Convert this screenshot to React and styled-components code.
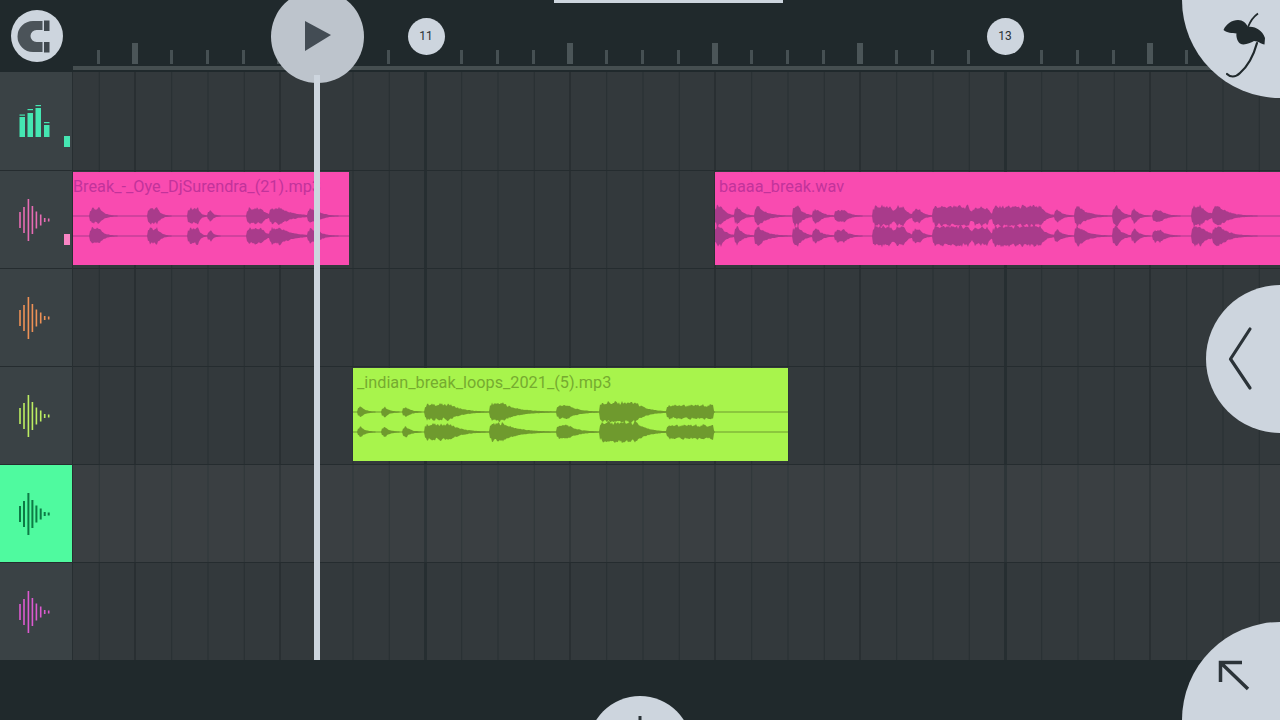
import React from "react";
import styled, { createGlobalStyle } from "styled-components";

const STEP = 36.25;
const LIGHT = "#cdd5de";
const DARK = "#20292c";

const GlobalStyle = createGlobalStyle`
  html, body {
    margin: 0;
    padding: 0;
    background: ${DARK};
    font-family: Roboto, "Liberation Sans", sans-serif;
  }
`;

// pseudo random so the wave forms stay the same on every load
const noise = (i) => {
  const v = Math.sin(i * 12.9898) * 43758.5453;
  return v - Math.floor(v);
};

// a hit is [start, hold, length, amplitude]
const envelope = (hits, x, seed) => {
  let amp = 0;
  hits.forEach(([start, hold, len, a]) => {
    const t = x - start;
    if (t < 0 || t > len) return;
    let v;
    if (t < 1.5) v = a * 0.7;
    else if (t < hold) v = a * (0.92 + 0.08 * Math.sin(t * 0.9));
    else v = a * Math.exp((-3.2 * (t - hold)) / (len - hold)) * (1 - (t - hold) / (len - hold) / 2);
    amp = Math.max(amp, v);
  });
  if (amp < 0.2) return 0;
  return amp * (0.78 + 0.34 * noise(x + seed)) + 0.3;
};

const wavePath = (hits, width, mid, seed) => {
  const top = [];
  const bottom = [];
  for (let x = 0; x <= width; x++) {
    const a = envelope(hits, x, seed);
    const b = envelope(hits, x, seed + 31);
    top.push(`${x} ${(mid - a).toFixed(1)}`);
    bottom.unshift(`${x} ${(mid + b).toFixed(1)}`);
  }
  return `M${top.join("L")}L${bottom.join("L")}Z`;
};

const firstPink = {
  name: "Break_-_Oye_DjSurendra_(21).mp3",
  left: 0,
  width: 276,
  bg: "#f94bb0",
  fg: "#c2339b",
  wave: "#a93b8b",
  hits: [
    [17, 9, 28, 8],
    [75, 9, 24, 8],
    [115, 10, 20, 8],
    [135, 3, 14, 5],
    [174, 14, 34, 8],
    [197, 10, 56, 8],
    [235, 8, 32, 7],
  ],
};

const limeLoop = {
  name: "_indian_break_loops_2021_(5).mp3",
  nameInset: 4,
  left: 280,
  width: 435,
  bg: "#a8f44c",
  fg: "#76ab30",
  wave: "#6f9a2e",
  hits: [
    [5, 3, 20, 5],
    [29, 3, 20, 5],
    [50, 3, 22, 5],
    [72, 24, 70, 8],
    [137, 12, 70, 9],
    [204, 10, 50, 7],
    [247, 35, 76, 10],
    [314, 46, 48, 7],
  ],
};

const secondPink = {
  name: "baaaa_break.wav",
  nameInset: 4,
  left: 642,
  width: 565,
  bg: "#f94bb0",
  fg: "#c2339b",
  wave: "#a93b8b",
  hits: [
    [0, 6, 26, 10],
    [20, 2, 22, 10],
    [40, 3, 36, 10],
    [78, 5, 26, 10],
    [98, 4, 26, 7],
    [120, 9, 30, 6],
    [158, 16, 44, 10],
    [180, 8, 26, 10],
    [198, 6, 24, 7],
    [218, 24, 34, 10],
    [237, 16, 34, 10],
    [258, 14, 28, 9],
    [278, 40, 64, 10],
    [317, 8, 30, 10],
    [340, 2, 22, 7],
    [360, 3, 38, 10],
    [398, 4, 24, 10],
    [417, 3, 20, 7],
    [438, 7, 30, 6],
    [477, 8, 38, 10],
    [498, 6, 44, 10],
  ],
};

const rowClips = [[], [firstPink, secondPink], [], [limeLoop], [], []];

const Page = styled.div`
  position: relative;
  width: 1280px;
  height: 720px;
  overflow: hidden;
  background: ${DARK};
  display: flex;
  flex-direction: column;
`;

const Header = styled.header`
  height: 72px;
  display: flex;
  flex: none;
`;

const SnapSlot = styled.div`
  width: 73px;
  flex: none;
  display: flex;
  align-items: center;
  justify-content: center;
`;

const SnapButton = styled.button`
  width: 52px;
  height: 52px;
  padding: 0;
  border: 0;
  border-radius: 50%;
  background: ${LIGHT};
  display: flex;
  align-items: center;
  justify-content: center;
`;

const Ruler = styled.div`
  flex: 1;
  display: flex;
  flex-direction: column;
  justify-content: flex-end;
  padding-bottom: 2px;
`;

const Ticks = styled.div`
  display: flex;
  align-items: flex-end;
  height: 22px;
  padding-left: 7.5px;
`;

const TickSlot = styled.div`
  flex: none;
  width: ${STEP}px;
  display: flex;
  justify-content: center;
`;

const Tick = styled.span`
  display: block;
  width: ${(p) => (p.$major ? 6 : 3)}px;
  height: ${(p) => (p.$major ? 21 : 14)}px;
  background: ${(p) => (p.$major ? "#4b5558" : "#465053")};
`;

const RulerLine = styled.div`
  height: 4px;
  margin-top: 2px;
  background: #454e50;
`;

const Body = styled.div`
  display: flex;
  flex: none;
  height: 588px;
`;

const Sidebar = styled.aside`
  width: 72px;
  flex: none;
  border-right: 1px solid #272e31;
  background: #3a4245;
`;

const TrackHead = styled.div`
  position: relative;
  height: 98px;
  box-sizing: border-box;
  border-top: ${(p) => (p.$first ? "0" : "1px solid #252c2f")};
  background: ${(p) => p.$bg || "transparent"};
  display: flex;
  align-items: center;
  padding-left: 18px;
`;

const Level = styled.span`
  position: absolute;
  left: 64px;
  width: 6px;
  height: 11px;
  top: ${(p) => p.$top}px;
  background: ${(p) => p.$color};
`;

const Timeline = styled.div`
  flex: 1;
  position: relative;
  background-color: #33393c;
  background-image:
    linear-gradient(90deg, #262e31 3px, transparent 3px),
    linear-gradient(90deg, #292f32 2px, transparent 2px),
    linear-gradient(90deg, #272e31 1px, transparent 1px);
  background-size: 580px 100%, 145px 100%, ${STEP}px 100%;
  background-position: 351px 0, 61px 0, 25.75px 0;
`;

const TrackRow = styled.div`
  position: relative;
  height: 98px;
  box-sizing: border-box;
  border-top: ${(p) => (p.$first ? "0" : "1px solid #252c2f")};
  background: ${(p) => (p.$active ? "rgba(255, 255, 255, 0.035)" : "transparent")};
`;

const Clip = styled.div`
  position: absolute;
  top: 1px;
  left: ${(p) => p.$left}px;
  width: ${(p) => p.$width}px;
  height: 93px;
  overflow: hidden;
  background: ${(p) => p.$bg};
  color: ${(p) => p.$fg};
`;

const ClipName = styled.div`
  position: absolute;
  top: 6px;
  left: ${(p) => p.$inset}px;
  font-size: 16.25px;
  line-height: 18px;
  white-space: nowrap;
`;

const ClipWave = styled.svg`
  position: absolute;
  left: 0;
  top: 0;
  display: block;
`;

const Footer = styled.footer`
  flex: 1;
  background: ${DARK};
`;

const TopHandle = styled.div`
  position: absolute;
  left: 554px;
  top: 0;
  width: 229px;
  height: 3px;
  background: ${LIGHT};
`;

const Playhead = styled.div`
  position: absolute;
  left: 314px;
  top: 75px;
  width: 6px;
  height: 585px;
  background: ${LIGHT};
  z-index: 2;
`;

const RoundButton = styled.button`
  position: absolute;
  left: ${(p) => p.$x - p.$r}px;
  top: ${(p) => p.$y - p.$r}px;
  width: ${(p) => p.$r * 2}px;
  height: ${(p) => p.$r * 2}px;
  padding: 0;
  border: 0;
  border-radius: 50%;
  background: ${(p) => p.$bg || LIGHT};
`;

const BarLabel = styled.div`
  position: absolute;
  left: ${(p) => p.$x - 18.5}px;
  top: 17.5px;
  width: 37px;
  height: 37px;
  border-radius: 50%;
  background: ${LIGHT};
  color: #2a3236;
  font-size: 12px;
  display: flex;
  align-items: center;
  justify-content: center;
`;

const Overlay = styled.svg`
  position: absolute;
  left: 0;
  top: 0;
  pointer-events: none;
  z-index: 3;
`;

const MagnetIcon = () => (
  <svg width="52" height="52" viewBox="0 0 52 52">
    <path d="M31.500 11H22A15.500 15.500 0 0 0 22 42H31.500V32H25.500A6 6 0 0 1 25.500 20H31.500Z" fill="#4b5359" />
    <rect x="33" y="10.500" width="5.500" height="10.500" fill="#40484e" />
    <rect x="33" y="32" width="5.500" height="10.500" fill="#40484e" />
  </svg>
);

const MixerIcon = () => (
  <svg width="34" height="36" viewBox="0 0 34 36">
    <g fill="#45e6b2">
      <rect x="1.500" y="14" width="5.500" height="20" />
      <rect x="1.500" y="11.500" width="5.500" height="1.200" />
      <rect x="9.500" y="10" width="5.500" height="24" />
      <rect x="9.500" y="6" width="5.500" height="1.200" />
      <rect x="17.500" y="5" width="5.500" height="29" />
      <rect x="17.500" y="2" width="5.500" height="1.200" />
      <rect x="26" y="22" width="5.500" height="12" />
      <rect x="26" y="19" width="5.500" height="1.200" />
    </g>
  </svg>
);

const bars = [
  [2, 16],
  [6, 26],
  [10.4, 42],
  [14.4, 28],
  [18.4, 17],
  [22.7, 11],
  [26.7, 4],
  [30.7, 3],
];

const WaveIcon = ({ color, heavy }) => (
  <svg width="34" height="44" viewBox="0 0 34 44">
    {bars.map(([x, h]) => (
      <rect key={x} x={x - (heavy ? 1 : 0.8)} y={22 - h / 2} width={heavy ? 2 : 1.6} height={h} fill={color} />
    ))}
  </svg>
);

const tracks = [
  { icon: <MixerIcon />, level: { top: 64, color: "#45e6b2" } },
  { icon: <WaveIcon color="#e76cb4" />, level: { top: 63, color: "#f985c4" } },
  { icon: <WaveIcon color="#ee9156" /> },
  { icon: <WaveIcon color="#bcee62" /> },
  { icon: <WaveIcon color="#0d7a45" heavy />, bg: "#4ffa9f" },
  { icon: <WaveIcon color="#dc5ad0" /> },
];

const ClipBlock = ({ clip, seed }) => (
  <Clip $left={clip.left} $width={clip.width} $bg={clip.bg} $fg={clip.fg}>
    <ClipName $inset={clip.nameInset || 0}>{clip.name}</ClipName>
    <ClipWave width={clip.width} height="93" viewBox={`0 0 ${clip.width} 93`}>
      <rect x="0" y="43.500" width={clip.width} height="1" fill={clip.wave} />
      <rect x="0" y="63.500" width={clip.width} height="1" fill={clip.wave} />
      <path d={wavePath(clip.hits, clip.width, 44, seed)} fill={clip.wave} />
      <path d={wavePath(clip.hits, clip.width, 64, seed + 7)} fill={clip.wave} />
    </ClipWave>
  </Clip>
);

export default function App() {
  return (
    <Page>
      <GlobalStyle />
      <Header>
        <SnapSlot>
          <SnapButton>
            <MagnetIcon />
          </SnapButton>
        </SnapSlot>
        <Ruler>
          <Ticks>
            {Array.from({ length: 33 }, (_, i) => (
              <TickSlot key={i}>
                {i !== 9 && i !== 25 && <Tick $major={i % 4 === 1} />}
              </TickSlot>
            ))}
          </Ticks>
          <RulerLine />
        </Ruler>
      </Header>

      <Body>
        <Sidebar>
          {tracks.map((t, i) => (
            <TrackHead key={i} $first={i === 0} $bg={t.bg}>
              {t.icon}
              {t.level && <Level $top={t.level.top} $color={t.level.color} />}
            </TrackHead>
          ))}
        </Sidebar>
        <Timeline>
          {rowClips.map((list, i) => (
            <TrackRow key={i} $first={i === 0} $active={i === 4}>
              {list.map((c, j) => (
                <ClipBlock key={c.name} clip={c} seed={i * 10 + j} />
              ))}
            </TrackRow>
          ))}
        </Timeline>
      </Body>

      <Footer />

      <TopHandle />
      <BarLabel $x={426}>11</BarLabel>
      <BarLabel $x={1005}>13</BarLabel>

      <RoundButton $x={317} $y={36} $r={46.5} $bg="#bdc4cc" />
      <RoundButton $x={1280} $y={0} $r={98} />
      <RoundButton $x={1280} $y={359} $r={74} />
      <RoundButton $x={1280} $y={720} $r={98} />
      <RoundButton $x={640} $y={748} $r={52} />
      <Playhead />

      <Overlay width="1280" height="720" viewBox="0 0 1280 720">
        {/* play */}
        <path d="M305 21L331 35L305 51Z" fill="#434c54" />
        {/* fruit logo */}
        <path
          d="M1223.500 30C1226 24 1232 20 1238 20C1243 20 1246 23 1248 27C1255 26 1262 30 1265 38L1264.500 44.500C1261 44 1258 41 1254 41C1250 43 1244 46 1240 43.500C1237 41 1236 36 1236.500 33.500C1232 33 1227 33 1223.500 30Z"
          fill="#20292c"
        />
        <path d="M1248 27C1250 22 1253 17 1258 13.500" fill="none" stroke="#20292c" strokeWidth="1.800" />
        <path d="M1257 43C1254 54 1248 66 1240 73C1235 78 1230 77 1227 74" fill="none" stroke="#20292c" strokeWidth="2.200" strokeLinecap="round" />
        {/* collapse */}
        <path d="M1250 329L1230.500 359L1250 388" fill="none" stroke="#2b3338" strokeWidth="3.200" strokeLinecap="round" strokeLinejoin="round" />
        {/* expand */}
        <path d="M1220.500 682V662.500H1242M1221 663L1248 689" fill="none" stroke="#2b3338" strokeWidth="3.500" />
        {/* add */}
        <rect x="638.500" y="716" width="3" height="4" fill="#2b3338" />
      </Overlay>
    </Page>
  );
}
